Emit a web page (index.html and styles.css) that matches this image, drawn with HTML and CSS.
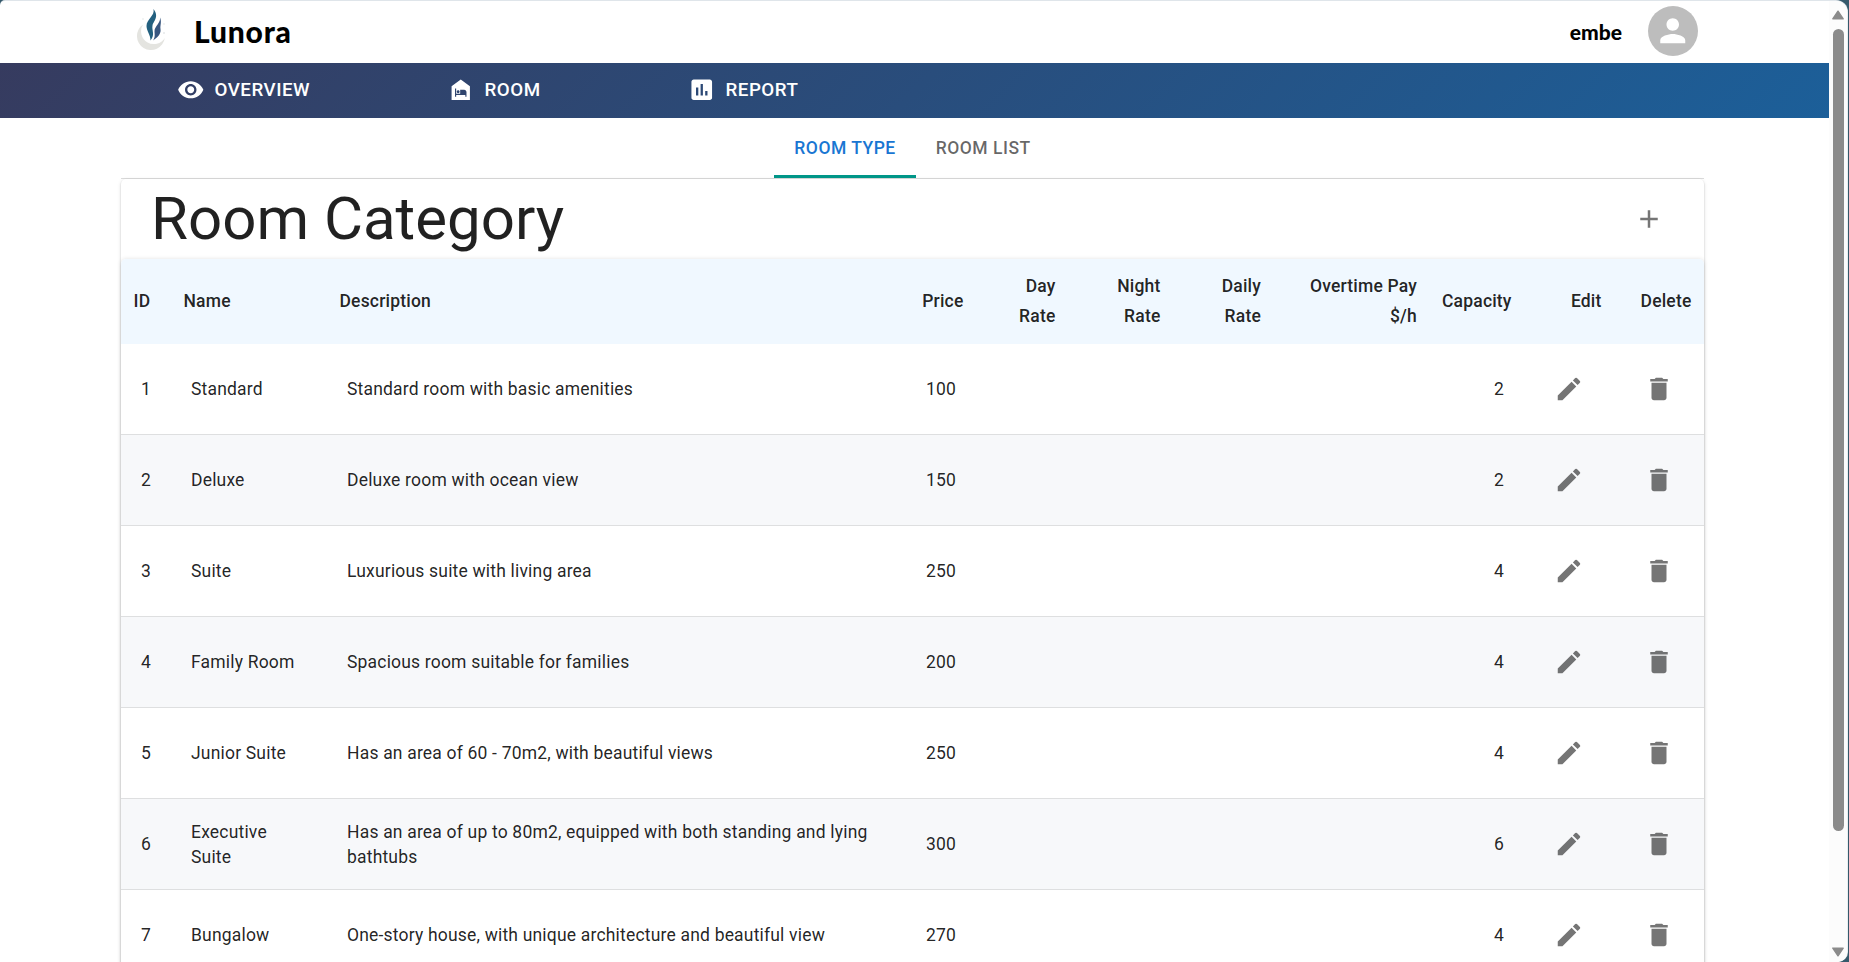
FILE: index.html
```html
<!DOCTYPE html>
<html lang="en">
<head>
<meta charset="utf-8">
<title>Lunora</title>
<link rel="stylesheet" href="styles.css">
</head>
<body>
<svg class="defs" aria-hidden="true">
  <symbol id="edit" viewBox="0 0 24 24"><path d="M3 17.25V21h3.75L17.81 9.94l-3.75-3.75L3 17.25zM20.71 7.04c.39-.39.39-1.02 0-1.41l-2.34-2.34a.9959.9959 0 0 0-1.41 0l-1.83 1.83 3.75 3.75 1.83-1.83z"/></symbol>
  <symbol id="delete" viewBox="0 0 24 24"><path d="M6 19c0 1.1.9 2 2 2h8c1.1 0 2-.9 2-2V7H6v12zM19 4h-3.5l-1-1h-5l-1 1H5v2h14V4z"/></symbol>
</svg>
<div class="window">
  <div class="page">
    <header class="topbar">
      <svg class="logo" viewBox="0 0 30 44">
        <path d="M7 15.500A14 14 0 1 0 28.800 29A12.400 12.400 0 1 1 7 15.500z" fill="#e4e4e0"/>
        <path d="M17.500 0C19 7 10.500 10 10.500 17c0 5 4 9 4 14.500 5-6 1-10 2-15C17.500 12 23.500 8 17.500 0z" fill="#23607f"/>
        <path d="M24 8.500c1 5-5.500 9-5.500 13.500 0 3 1 6-1.500 9.500C24 27 25 23 24.500 20c-.5-4 1.500-7-.5-11.500z" fill="#38567f"/>
        <circle cx="7" cy="10" r="1" fill="#eef0f0"/><circle cx="28" cy="15" r="1" fill="#eef0f0"/><circle cx="28" cy="24" r="1" fill="#e6e9ea"/>
      </svg>
      <span class="brand">Lunora</span>
      <span class="user">embe</span>
      <span class="avatar"><svg viewBox="0 0 24 24"><path d="M12 12c2.210 0 4-1.790 4-4s-1.790-4-4-4-4 1.790-4 4 1.790 4 4 4zm0 2c-2.670 0-8 1.340-8 4v2h16v-2c0-2.660-5.330-4-8-4z"/></svg></span>
    </header>
    <nav class="nav">
      <a class="nav-item"><svg viewBox="0 0 24 24"><path d="M12 4.500C7 4.500 2.730 7.610 1 12c1.730 4.390 6 7.500 11 7.500s9.270-3.110 11-7.500c-1.730-4.390-6-7.500-11-7.500zM12 17c-2.760 0-5-2.240-5-5s2.240-5 5-5 5 2.240 5 5-2.240 5-5 5zm0-8c-1.660 0-3 1.340-3 3s1.340 3 3 3 3-1.340 3-3-1.340-3-3-3z"/></svg>OVERVIEW</a>
      <a class="nav-item"><svg viewBox="0 0 24 24"><path d="M12 3 4 9v12h16V9l-8-6zM9.750 12.500c.69 0 1.250.56 1.250 1.250S10.440 15 9.750 15 8.500 14.440 8.500 13.750s.56-1.250 1.250-1.250zM17 18h-1v-1.500H8V18H7v-7h1v4.500h3.500V12H15c1.100 0 2 .9 2 2v4z"/></svg>ROOM</a>
      <a class="nav-item"><svg viewBox="0 0 24 24"><path d="M19 3H5c-1.100 0-2 .9-2 2v14c0 1.100.9 2 2 2h14c1.100 0 2-.9 2-2V5c0-1.100-.9-2-2-2zM9 17H7v-7h2v7zm4 0h-2V7h2v10zm4 0h-2v-4h2v4z"/></svg>REPORT</a>
    </nav>
    <main class="content">
      <div class="tabs"><span class="tab active">ROOM TYPE</span><span class="tab">ROOM LIST</span></div>
      <section class="card">
        <div class="card-head">
          <h1>Room Category</h1>
          <svg class="icon" viewBox="0 0 24 24"><path d="M19 13h-6v6h-2v-6H5v-2h6V5h2v6h6v2z"/></svg>
        </div>
        <table class="rooms">
          <colgroup><col class="c-id"><col class="c-name"><col class="c-desc"><col class="c-price"><col class="c-day"><col class="c-night"><col class="c-daily"><col class="c-over"><col class="c-cap"><col class="c-act"><col class="c-act"></colgroup>
          <thead><tr><th>ID</th><th>Name</th><th>Description</th><th class="num">Price</th><th class="num">Day<br>Rate</th><th class="num">Night<br>Rate</th><th class="num">Daily<br>Rate</th><th class="num">Overtime Pay<br>$/h</th><th class="num">Capacity</th><th class="num">Edit</th><th class="num">Delete</th></tr></thead>
          <tbody>
            <tr><td>1</td><td>Standard</td><td>Standard room with basic amenities</td><td class="num">100</td><td></td><td></td><td></td><td></td><td class="num">2</td><td><svg class="icon"><use href="#edit"/></svg></td><td><svg class="icon"><use href="#delete"/></svg></td></tr>
            <tr><td>2</td><td>Deluxe</td><td>Deluxe room with ocean view</td><td class="num">150</td><td></td><td></td><td></td><td></td><td class="num">2</td><td><svg class="icon"><use href="#edit"/></svg></td><td><svg class="icon"><use href="#delete"/></svg></td></tr>
            <tr><td>3</td><td>Suite</td><td>Luxurious suite with living area</td><td class="num">250</td><td></td><td></td><td></td><td></td><td class="num">4</td><td><svg class="icon"><use href="#edit"/></svg></td><td><svg class="icon"><use href="#delete"/></svg></td></tr>
            <tr><td>4</td><td>Family Room</td><td>Spacious room suitable for families</td><td class="num">200</td><td></td><td></td><td></td><td></td><td class="num">4</td><td><svg class="icon"><use href="#edit"/></svg></td><td><svg class="icon"><use href="#delete"/></svg></td></tr>
            <tr><td>5</td><td>Junior Suite</td><td>Has an area of 60 - 70m2, with beautiful views</td><td class="num">250</td><td></td><td></td><td></td><td></td><td class="num">4</td><td><svg class="icon"><use href="#edit"/></svg></td><td><svg class="icon"><use href="#delete"/></svg></td></tr>
            <tr><td>6</td><td>Executive<br>Suite</td><td>Has an area of up to 80m2, equipped with both standing and lying bathtubs</td><td class="num">300</td><td></td><td></td><td></td><td></td><td class="num">6</td><td><svg class="icon"><use href="#edit"/></svg></td><td><svg class="icon"><use href="#delete"/></svg></td></tr>
            <tr><td>7</td><td>Bungalow</td><td>One-story house, with unique architecture and beautiful view</td><td class="num">270</td><td></td><td></td><td></td><td></td><td class="num">4</td><td><svg class="icon"><use href="#edit"/></svg></td><td><svg class="icon"><use href="#delete"/></svg></td></tr>
          </tbody>
        </table>
      </section>
    </main>
  </div>
  <div class="scrollbar">
    <svg viewBox="0 0 12 10"><path d="M6 1.200 11.200 8.800H.8z"/></svg>
    <div class="thumb"></div>
    <svg viewBox="0 0 12 10"><path d="M.8 1.200h10.400L6 8.800z"/></svg>
  </div>
</div>
</body>
</html>
```
FILE: styles.css
```css
* { box-sizing: border-box; }
body { margin: 0; height: 962px; overflow: hidden; background: #35596b; font-family: Roboto, "Liberation Sans", sans-serif; color: rgba(0,0,0,.87); }
.defs { display: none; }
.window { display: flex; width: 1848px; height: 962px; overflow: hidden; background: #fff; border-top: 1px solid #dfe5ea; border-right: 1px solid #e8eef0; border-radius: 5px 12px 10px 0; }
.page { width: 1829px; height: 961px; overflow: hidden; flex: none; }
.topbar { display: flex; align-items: center; height: 62px; padding: 0 131px 2px 136px; font-family: Lato, sans-serif; font-weight: 900; color: #000; }
.logo { width: 30px; height: 44px; filter: blur(.4px); }
.brand { margin-left: 28px; font-size: 30px; letter-spacing: .8px; }
.user { margin-left: auto; font-size: 21px; }
.avatar { display: flex; align-items: center; justify-content: center; width: 50px; height: 50px; margin-left: 26px; border-radius: 50%; background: #bdbdbd; }
.avatar svg { width: 37.5px; fill: #fff; }
.nav { display: grid; grid-template-columns: 270px 241px 200px; align-items: center; height: 55px; padding: 0 0 2px 177px; background: linear-gradient(135deg, #363b5f, #1c5f99); }
.nav-item { display: flex; align-items: center; gap: 10px; color: #fff; font-size: 18.75px; font-weight: 500; letter-spacing: .5px; }
.nav-item svg { width: 27.5px; fill: #fff; }
.content { margin: 0 125px 0 121px; }
.tabs { display: flex; justify-content: center; height: 61px; border-bottom: 1px solid #dcdcdc; }
.tab { height: 60px; padding: 0 20px; border-bottom: 3px solid transparent; font-size: 17.5px; font-weight: 500; line-height: 60px; letter-spacing: .02857em; color: rgba(0,0,0,.6); }
.tab.active { color: #1976d2; border-color: #009688; }
.card { border-radius: 5px; box-shadow: 0 1px 2px rgba(0,0,0,.2), 0 1px 4px rgba(0,0,0,.1); }
.card-head { display: flex; align-items: center; justify-content: space-between; height: 80px; padding: 0 40px 0 30px; }
h1 { margin: 0; font-size: 60px; font-weight: 400; line-height: 70px; }
.icon { display: block; width: 30px; height: 30px; fill: rgba(0,0,0,.54); }
.rooms { width: 1583px; table-layout: fixed; border-collapse: separate; border-spacing: 0; border-radius: 5px; box-shadow: 0 2px 2px rgba(0,0,0,.08), 0 0 4px rgba(0,0,0,.12); font-size: 17.5px; letter-spacing: .01071em; }
.c-id { width: 50px; }
.c-name { width: 156px; }
.c-desc { width: 569.5px; }
.c-price { width: 79.5px; }
.c-day { width: 92px; }
.c-night { width: 105px; }
.c-daily { width: 100.5px; }
.c-over { width: 156px; }
.c-cap { width: 94.5px; }
.c-act { width: 90px; }
th { height: 85px; padding: 0 12.5px 1.5px; background: #f0f8ff; font-weight: 500; line-height: 30px; text-align: left; }
th:first-child { border-top-left-radius: 5px; }
th:last-child { border-top-right-radius: 5px; }
td { height: 91px; padding: 19.5px 20px 18px; border-bottom: 1px solid #dedfe0; line-height: 25.025px; background: #fff; }
tr:nth-child(even) td { background: #f7f8fa; }
td .icon { margin: 0 0 2px 10px; }
.num { text-align: right; }
td:last-child { padding-right: 0; }
.scrollbar { display: flex; flex-direction: column; align-items: center; width: 18px; height: 961px; padding: 9px 0 5px; background: #fcfcfc; }
.scrollbar svg { width: 12px; height: 10px; fill: #8b8b8b; stroke: #8b8b8b; stroke-width: 1.4; stroke-linejoin: round; }
.thumb { width: 11px; height: 802px; margin: 9px 0 auto; border-radius: 6px; background: #8b8b8b; }
```
